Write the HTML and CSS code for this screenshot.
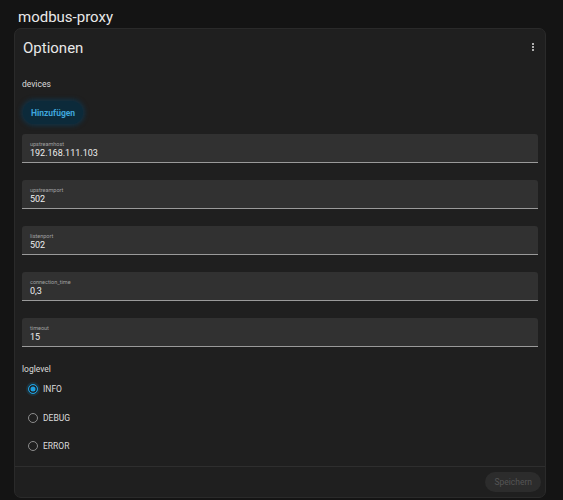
FILE: index.html
```html
<!DOCTYPE html>
<html lang="en">
<head>
    <meta charset="UTF-8">
    <title>modbus-proxy</title>
    <link rel="stylesheet" href="styles.css">
</head>
<body>
    <h1 class="page-title">modbus-proxy</h1>

    <div class="card">
        <div class="card-header">
            <h2>Optionen</h2>
            <svg class="menu-icon" width="12" height="12" viewBox="0 0 24 24">
                <path fill="#e1e1e1" d="M12,16A2,2 0 0,1 14,18A2,2 0 0,1 12,20A2,2 0 0,1 10,18A2,2 0 0,1 12,16M12,10A2,2 0 0,1 14,12A2,2 0 0,1 12,14A2,2 0 0,1 10,12A2,2 0 0,1 12,10M12,4A2,2 0 0,1 14,6A2,2 0 0,1 12,8A2,2 0 0,1 10,6A2,2 0 0,1 12,4Z"/>
            </svg>
        </div>

        <div class="card-body">
            <div class="section-label">devices</div>
            <button class="add-btn">Hinzufügen</button>

            <div class="field">
                <span class="field-label">upstreamhost</span>
                <span class="field-value">192.168.111.103</span>
            </div>
            <div class="field">
                <span class="field-label">upstreamport</span>
                <span class="field-value">502</span>
            </div>
            <div class="field">
                <span class="field-label">listenport</span>
                <span class="field-value">502</span>
            </div>
            <div class="field">
                <span class="field-label">connection_time</span>
                <span class="field-value">0,3</span>
            </div>
            <div class="field">
                <span class="field-label">timeout</span>
                <span class="field-value">15</span>
            </div>

            <div class="section-label loglevel">loglevel</div>
            <div class="radio-group">
                <div class="radio checked"><span class="dot"></span>INFO</div>
                <div class="radio"><span class="dot"></span>DEBUG</div>
                <div class="radio"><span class="dot"></span>ERROR</div>
            </div>
        </div>

        <div class="card-actions">
            <button class="save-btn">Speichern</button>
        </div>
    </div>
</body>
</html>
```

FILE: styles.css
```css
body {
    font-family: Roboto, 'Noto Sans', sans-serif;
    background-color: #141414;
    margin: 0;
    padding: 0 17px 0 14px;
    color: #e1e1e1;
}
.page-title {
    font-size: 15px;
    font-weight: 400;
    margin: 0;
    padding: 8px 0 0 4px;
    height: 20px;
    color: #e8e8e8;
}
.card {
    background-color: #1f1f1f;
    border: 1px solid #2a2a2a;
    border-radius: 7px;
    height: 470px;
    display: flex;
    flex-direction: column;
    box-sizing: border-box;
}
.card-header {
    display: flex;
    justify-content: space-between;
    align-items: flex-start;
    padding: 10px 6px 0 8px;
}
.card-header h2 {
    font-size: 15px;
    font-weight: 400;
    margin: 0;
    line-height: 18px;
    color: #e8e8e8;
}
.menu-icon {
    margin-top: 2px;
}
.card-body {
    padding: 0 7px;
    flex: 1;
    min-height: 0;
    overflow: hidden;
}
.section-label {
    font-size: 8.5px;
    margin-top: 22px;
    color: #dcdcdc;
}
.add-btn {
    display: block;
    margin: 12px 0 10px 1px;
    padding: 0 8px;
    height: 23px;
    border: none;
    border-radius: 12px;
    background-color: #0c2a3a;
    box-shadow: 0 0 4px 2px rgba(10, 60, 90, 0.6);
    color: #3fa6dc;
    font-family: Roboto, sans-serif;
    font-size: 8.5px;
    font-weight: 700;
}
.field {
    background-color: #313131;
    border-bottom: 1px solid #9a9a9a;
    border-radius: 3px 3px 0 0;
    height: 28px;
    margin-bottom: 17px;
    padding: 0 8px;
    display: flex;
    flex-direction: column;
    justify-content: center;
}
.field-label {
    font-size: 5.5px;
    color: #a0a0a0;
    line-height: 7px;
    margin-top: 3px;
}
.field-value {
    font-size: 9px;
    color: #eeeeee;
    line-height: 11px;
}
.loglevel {
    margin-top: 5px;
}
.radio-group {
    margin-top: 1px;
    padding-left: 6px;
}
.radio {
    display: flex;
    align-items: center;
    gap: 5px;
    height: 28.5px;
    font-size: 8.5px;
    color: #dcdcdc;
}
.dot {
    width: 8px;
    height: 8px;
    border: 1.5px solid #8c8c8c;
    border-radius: 50%;
    box-sizing: content-box;
}
.radio.checked .dot {
    border-color: #1ea0e0;
    background-color: #1ea0e0;
    box-shadow: inset 0 0 0 1.5px #1f1f1f, 0 0 0 2px rgba(30, 160, 224, 0.15);
}
.card-actions {
    border-top: 1px solid #2e2e2e;
    display: flex;
    justify-content: flex-end;
    padding: 5px 4px 5px 0;
}
.save-btn {
    height: 20px;
    padding: 0 9px;
    border: none;
    border-radius: 10px;
    background-color: #2c2c2c;
    color: #555555;
    font-family: Roboto, sans-serif;
    font-size: 8.5px;
}
```
